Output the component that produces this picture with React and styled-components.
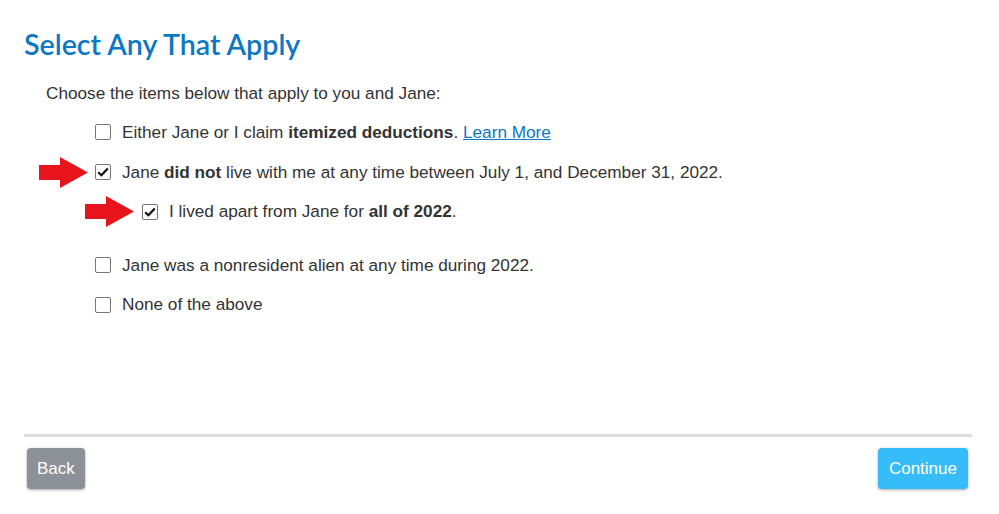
import React from 'react';
import styled, { createGlobalStyle } from 'styled-components';

const Global = createGlobalStyle`
body {
  margin: 0;
  background: #fff;
  font-family: "Liberation Sans", Arial, sans-serif;
  color: #333;
}
`

const Page = styled.div`
width: 999px;
height: 514px;
padding: 0 27px 0 24px;
box-sizing: border-box;
display: flex;
flex-direction: column;
`

const Title = styled.h1`
margin: 27px 0 0 0;
font-family: Lato, "Open Sans", sans-serif;
font-weight: 600;
font-size: 28.6px;
line-height: 35px;
color: #0b77c5;
`

const Intro = styled.p`
margin: 20px 0 0 22px;
font-size: 17.2px;
line-height: 22px;
`

const List = styled.div`
margin-top: 8px;
display: flex;
flex-direction: column;
`

const Row = styled.label`
position: relative;
display: flex;
align-items: center;
height: ${p => p.$h || 40}px;
padding-left: ${p => p.$indent}px;
margin-top: ${p => p.$gap || 0}px;
font-size: 17.2px;
`

const Box = styled.span`
width: 16px;
height: 16px;
box-sizing: border-box;
border: 1px solid #767676;
border-radius: 2px;
background: #fff;
display: flex;
align-items: center;
justify-content: center;
margin-right: 11px;
flex: none;
`

const Arrow = styled.svg`
position: absolute;
left: ${p => p.$left}px;
top: 50%;
margin-top: -15.5px;
`

const Bold = styled.b`
font-weight: 700;
`

const LearnMore = styled.a`
color: #0b77c5;
text-decoration: underline;
`

const Spacer = styled.div`
flex: 1;
`

const Divider = styled.hr`
margin: 0;
border: 0;
height: 3px;
background: #dcdcdc;
`

const Footer = styled.div`
display: flex;
justify-content: space-between;
padding: 11px 4px 25px 3px;
`

const Button = styled.button`
height: 41px;
padding: 0 ${p => p.$pad}px;
border: 0;
border-radius: 4px;
background: ${p => p.$bg};
color: #fff;
font-family: "Liberation Sans", Arial, sans-serif;
font-size: 17px;
box-shadow: 0 1px 3px rgba(0, 0, 0, 0.35);
`

function RedArrow({ left }) {
  return (
    <Arrow $left={left} width="50" height="31" viewBox="0 0 50 31">
      <path d="M0 8 H21 V0 L49 15.5 L21 31 V23 H0 Z" fill="#e8141b" />
    </Arrow>
  )
}

function Check({ checked }) {
  return (
    <Box>
      {checked && (
        <svg width="12" height="10" viewBox="0 0 12 10">
          <path d="M1.2 5.2 L4.4 8.3 L10.8 1.4" fill="none" stroke="#111" strokeWidth="2.2" />
        </svg>
      )}
    </Box>
  )
}

export default function App() {
  return (
    <>
      <Global />
      <Page>
        <Title>Select Any That Apply</Title>
        <Intro>Choose the items below that apply to you and Jane:</Intro>
        <List>
          <Row $indent={71}>
            <Check />
            <span>Either Jane or I claim <Bold>itemized deductions</Bold>. <LearnMore href="#">Learn More</LearnMore></span>
          </Row>
          <Row $indent={71}>
            <RedArrow left={15} />
            <Check checked />
            <span>Jane <Bold>did not</Bold> live with me at any time between July 1, and December 31, 2022.</span>
          </Row>
          <Row $indent={118} $h={39}>
            <RedArrow left={61} />
            <Check checked />
            <span>I lived apart from Jane for <Bold>all of 2022</Bold>.</span>
          </Row>
          <Row $indent={71} $gap={14}>
            <Check />
            <span>Jane was a nonresident alien at any time during 2022.</span>
          </Row>
          <Row $indent={71} $h={39}>
            <Check />
            <span>None of the above</span>
          </Row>
        </List>
        <Spacer />
        <Divider />
        <Footer>
          <Button $bg="#8c9097" $pad={10}>Back</Button>
          <Button $bg="#36bdf9" $pad={11}>Continue</Button>
        </Footer>
      </Page>
    </>
  )
}
